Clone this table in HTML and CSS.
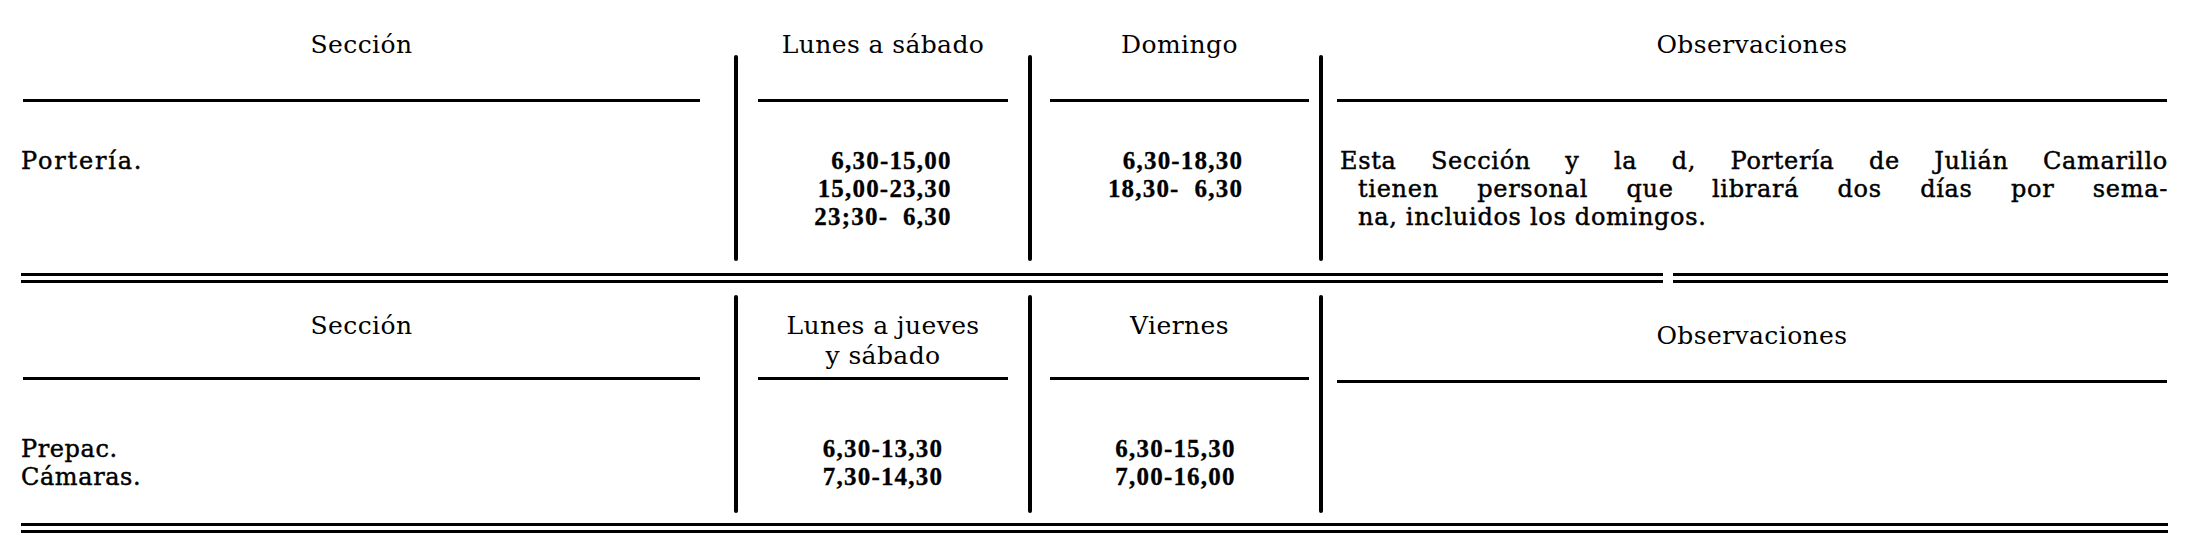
FILE: index.html
```html
<!DOCTYPE html>
<html lang="es">
<head>
<meta charset="utf-8">
<title>Horarios por sección</title>
<link rel="stylesheet" href="styles.css">
</head>
<body>
<div class="page">
  <section class="tbl t1">
    <div class="hd c1">Sección</div>
    <div class="vr"></div>
    <div class="hd c2">Lunes a sábado</div>
    <div class="vr"></div>
    <div class="hd c3">Domingo</div>
    <div class="vr"></div>
    <div class="hd c4">Observaciones</div>

    <div class="dt name">Portería.</div>
    <div class="dt times"><span class="blk">6,30-15,00<br>15,00-23,30<br>23;30-&nbsp;&nbsp;6,30</span></div>
    <div class="dt times"><span class="blk">6,30-18,30<br>18,30-&nbsp;&nbsp;6,30</span></div>
    <div class="dt obs">
      <span class="ln">Esta Sección y la d, Portería de Julián Camarillo</span>
      <span class="ln in">tienen personal que librará dos días por sema-</span>
      <span class="ln in last">na, incluidos los domingos.</span>
    </div>
  </section>

  <div class="dbl">
    <span class="seg seg-a"></span>
    <span class="seg seg-b"></span>
  </div>

  <section class="tbl t2">
    <div class="hd c1">Sección</div>
    <div class="vr"></div>
    <div class="hd c2">Lunes a jueves<br>y sábado</div>
    <div class="vr"></div>
    <div class="hd c3">Viernes</div>
    <div class="vr"></div>
    <div class="hd c4 obs-hd">Observaciones</div>

    <div class="dt name">Prepac.<br>Cámaras.</div>
    <div class="dt times"><span class="blk">6,30-13,30<br>7,30-14,30</span></div>
    <div class="dt times"><span class="blk">6,30-15,30<br>7,00-16,00</span></div>
    <div class="dt obs"></div>
  </section>

  <div class="dbl">
    <span class="seg seg-full"></span>
  </div>
</div>
</body>
</html>
```

FILE: styles.css
```css
html, body {
  margin: 0;
  padding: 0;
  background: #ffffff;
  color: #000000;
}

.page {
  width: 2147px;
  padding: 0 27px 0 21px;
  font-family: "DejaVu Serif", "Liberation Serif", serif;
}

.tbl {
  display: grid;
  grid-template-columns: 713px 4px 290px 4px 287px 4px 845px;
}

.vr {
  grid-row: span 2;
  background: #000000;
  border-radius: 2px;
}

.t1 .vr {
  margin: 55px 0 12px;
}

.t2 .vr {
  margin: 12px 0 10px;
}

.hd {
  border-bottom: 3px solid #000000;
  text-align: center;
  font-size: 25px;
  font-weight: normal;
  line-height: 30px;
  letter-spacing: 0.4px;
}

.t1 .hd {
  padding-top: 30px;
  height: 69px;
}

.t2 .hd {
  padding-top: 28px;
  height: 66px;
}

.t2 .obs-hd {
  padding-top: 38px;
  height: 59px;
}

.c1 { margin: 0 34px 0 2px; }
.c2 { margin: 0 20px 0 20px; }
.c3 { margin: 0 10px 0 18px; }
.c4 { margin: 0 1px 0 14px; }

.dt {
  font-size: 24px;
  line-height: 28px;
  -webkit-text-stroke: 0.45px #000000;
}

.t1 .dt {
  padding: 45px 0 42px;
}

.t2 .dt {
  padding: 52px 0 32px;
}

.name {
  text-align: left;
}

.t1 .name {
  letter-spacing: 1.8px;
}

.t2 .name {
  letter-spacing: 0.6px;
}

.times {
  text-align: center;
}

.times .blk {
  display: inline-block;
  text-align: right;
  font-family: "Liberation Serif", "DejaVu Serif", serif;
  font-weight: bold;
  font-size: 25px;
  line-height: 28px;
  letter-spacing: 1.2px;
  -webkit-text-stroke: 0.3px #000000;
}

.obs {
  padding-left: 17px !important;
  letter-spacing: 0.7px;
}

.ln {
  display: block;
  text-align: justify;
  text-align-last: justify;
}

.ln.in {
  padding-left: 18px;
}

.ln.last {
  text-align-last: auto;
}

.dbl {
  display: flex;
  gap: 10px;
  height: 10px;
}

.seg {
  display: block;
  box-sizing: border-box;
  height: 10px;
  border-top: 3px solid #000000;
  border-bottom: 3px solid #000000;
}

.seg-a {
  flex: 0 0 1642px;
}

.seg-b {
  flex: 1 1 auto;
}

.seg-full {
  flex: 1 1 auto;
}
```
